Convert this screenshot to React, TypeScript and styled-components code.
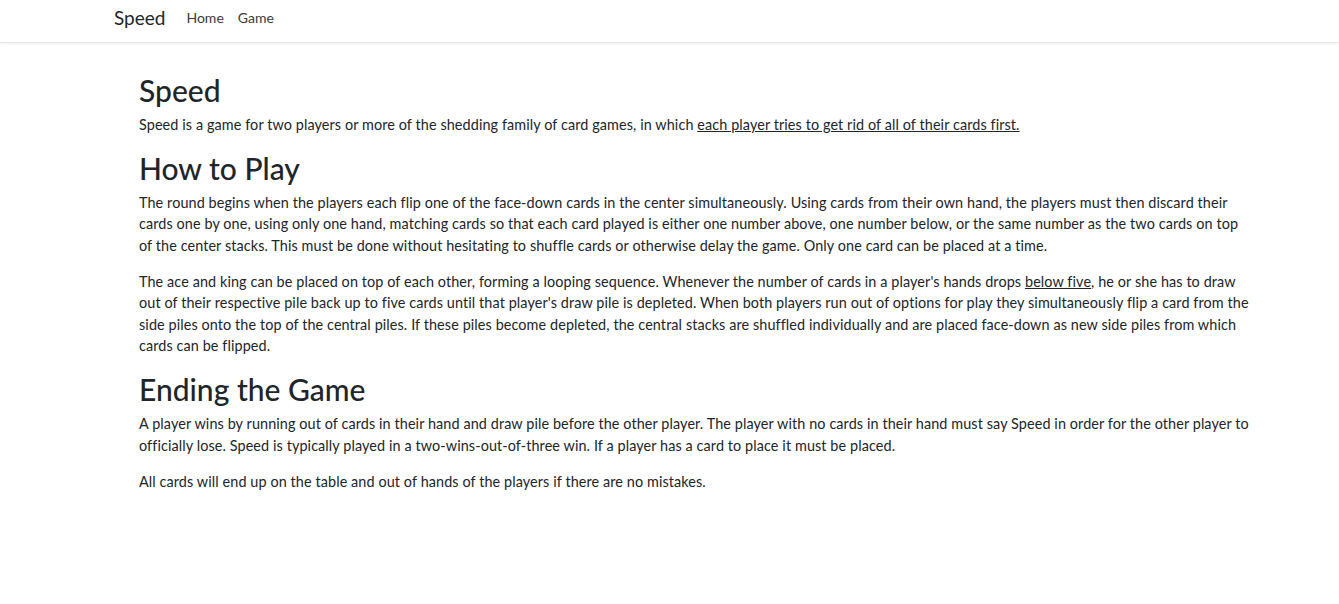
import styled, { createGlobalStyle } from 'styled-components';

const GlobalStyle = createGlobalStyle`
  html, body {
    margin: 0;
    padding: 0;
    background: #fff;
  }
  body {
    font-family: 'Lato', 'Open Sans', sans-serif;
    color: #212529;
  }
  * {
    box-sizing: border-box;
  }
`;

const App = () => {
  return (
    <>
      <GlobalStyle />
      <NavBar>
        <NavInner>
          <Brand href='#'>Speed</Brand>
          <NavLinks>
            <NavLink href='#'>Home</NavLink>
            <NavLink href='#'>Game</NavLink>
          </NavLinks>
        </NavInner>
      </NavBar>
      <Main>
        <Heading>Speed</Heading>
        <Paragraph>
          Speed is a game for two players or more of the shedding family of
          card games, in which{' '}
          <Underlined>each player tries to get rid of all of their cards first.</Underlined>
        </Paragraph>

        <Heading>How to Play</Heading>
        <Paragraph>
          The round begins when the players each flip one of the face-down cards
          in the center simultaneously. Using cards from their own hand, the
          players must then discard their cards one by one, using only one hand,
          matching cards so that each card played is either one number above,
          one number below, or the same number as the two cards on top of the
          center stacks. This must be done without hesitating to shuffle cards or
          otherwise delay the game. Only one card can be placed at a time.
        </Paragraph>
        <Paragraph>
          The ace and king can be placed on top of each other, forming a looping
          sequence. Whenever the number of cards in a player's hands drops{' '}
          <Underlined>below five</Underlined>, he or she has to draw out of their
          respective pile back up to five cards until that player's draw pile is
          depleted. When both players run out of options for play they
          simultaneously flip a card from the side piles onto the top of the
          central piles. If these piles become depleted, the central stacks are
          shuffled individually and are placed face-down as new side piles from
          which cards can be flipped.
        </Paragraph>

        <Heading>Ending the Game</Heading>
        <Paragraph>
          A player wins by running out of cards in their hand and draw pile
          before the other player. The player with no cards in their hand must
          say Speed in order for the other player to officially lose. Speed is
          typically played in a two-wins-out-of-three win. If a player has a card
          to place it must be placed.
        </Paragraph>
        <Paragraph>
          All cards will end up on the table and out of hands of the players if
          there are no mistakes.
        </Paragraph>
      </Main>
    </>
  );
};

export default App;

const NavBar = styled.nav`
  height: 43px;
  background: #fff;
  border-bottom: 1px solid #e5e5e5;
  box-shadow: 0 1px 3px rgba(0, 0, 0, 0.06);
`;
const NavInner = styled.div`
  display: flex;
  align-items: center;
  height: 100%;
  padding: 0 0 8px 114px;
`;
const Brand = styled.a`
  font-size: 19px;
  color: #212529;
  text-decoration: none;
  margin-right: 21px;
`;
const NavLinks = styled.div`
  display: flex;
  gap: 14px;
`;
const NavLink = styled.a`
  font-size: 14px;
  color: #3a3a3a;
  text-decoration: none;
`;
const Main = styled.main`
  width: 1111px;
  margin-left: 139px;
  padding-top: 29px;
`;
const Heading = styled.h1`
  margin: 0 0 6px;
  font-size: 30px;
  line-height: 36px;
  font-weight: 500;
`;
const Paragraph = styled.p`
  margin: 0 0 14.4px;
  font-size: 14.4px;
  line-height: 21.5px;
  letter-spacing: 0.1px;
`;
const Underlined = styled.span`
  text-decoration: underline;
`;
